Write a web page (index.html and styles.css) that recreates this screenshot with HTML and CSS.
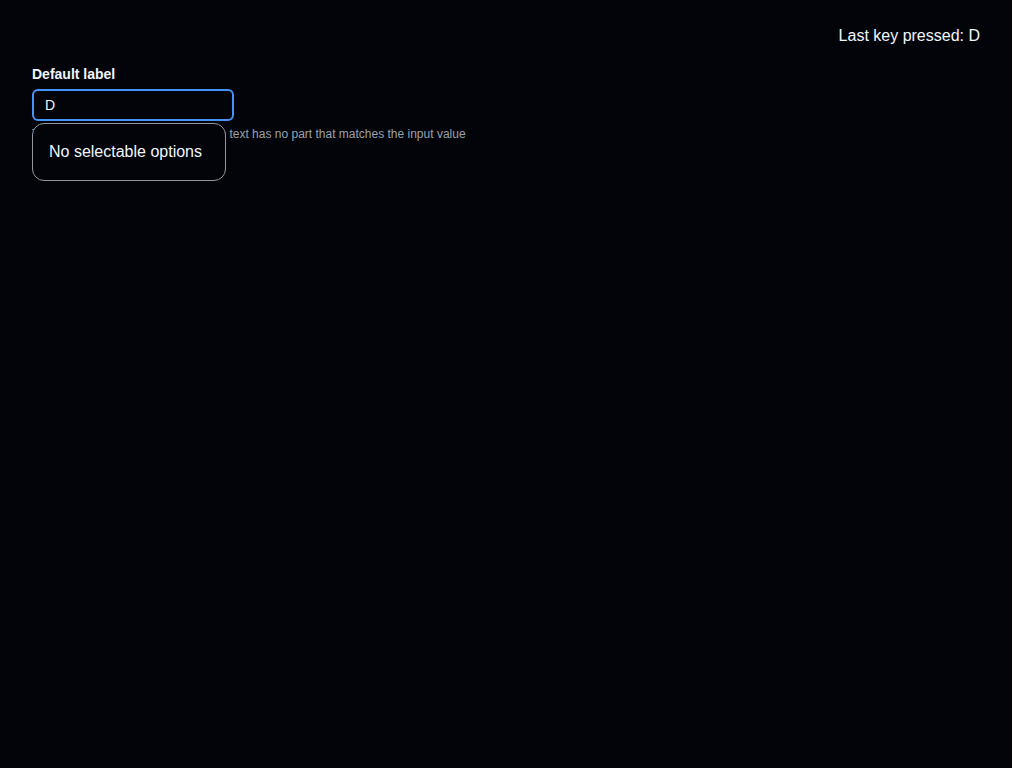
FILE: index.html
```html
<!DOCTYPE html>
<html>
<head>
<meta charset="utf-8">
<link rel="stylesheet" href="styles.css">
</head>
<body>
<div class="page">
  <div class="topbar">Last key pressed: D</div>
  <div class="field">
    <label class="label" for="ac">Default label</label>
    <div class="control">
      <input id="ac" class="input" type="text" value="D">
      <div class="caption">This empty state shows because the text has no part that matches the input value</div>
      <div class="menu">No selectable options</div>
    </div>
  </div>
</div>
</body>
</html>
```

FILE: styles.css
```css
html, body {
  margin: 0;
  padding: 0;
  background: #02040a;
  height: 100%;
}
body {
  font-family: "Liberation Sans", Arial, sans-serif;
  color: #f0f6fc;
}
.page {
  padding: 27px 32px 0 32px;
}
.topbar {
  text-align: right;
  font-size: 16px;
  line-height: 18px;
}
.field {
  display: flex;
  flex-direction: column;
  align-items: flex-start;
  margin-top: 19px;
}
.label {
  font-size: 14px;
  font-weight: 700;
  line-height: 20px;
  margin-bottom: 5px;
}
.control {
  position: relative;
}
.input {
  box-sizing: border-box;
  width: 202px;
  height: 32px;
  border: 2px solid #4493f8;
  border-radius: 6px;
  background: #02040a;
  color: #f0f6fc;
  font-family: "Liberation Sans", Arial, sans-serif;
  font-size: 14px;
  padding: 0 11px;
  outline: none;
  display: block;
}
.caption {
  font-size: 12px;
  line-height: 18px;
  color: #9ba1aa;
  margin-top: 4px;
  white-space: nowrap;
}
.menu {
  position: absolute;
  left: 0;
  top: 34px;
  box-sizing: border-box;
  width: 194px;
  height: 58px;
  border: 1px solid #9198a1;
  border-radius: 12px;
  background: #02040a;
  font-size: 16px;
  padding: 18px 16px;
  line-height: 20px;
  white-space: nowrap;
}
```
